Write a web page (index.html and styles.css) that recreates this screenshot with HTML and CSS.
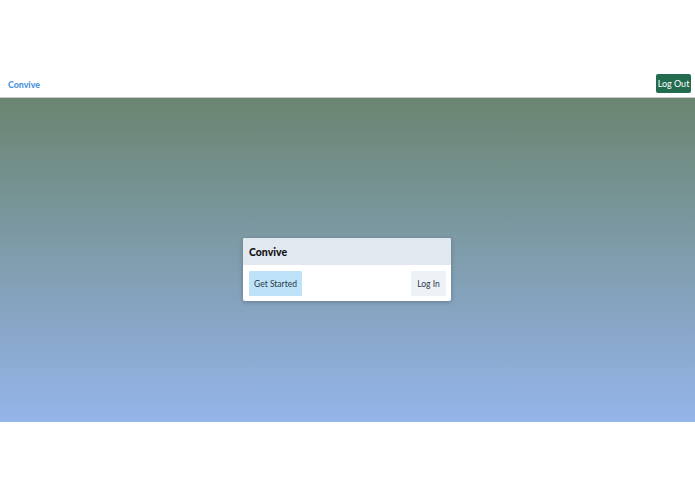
FILE: index.html
```html
<!DOCTYPE html>
<html lang="en">
<head>
    <meta charset="UTF-8">
    <meta name="viewport" content="width=device-width, initial-scale=1.0">
    <title>Convive</title>
    <link rel="stylesheet" href="styles.css">
</head>
<body>
    <nav class="navbar">
        <a class="brand" href="#">Convive</a>
        <button class="logout">Log Out</button>
    </nav>
    <main class="hero">
        <div class="card">
            <div class="card-header">Convive</div>
            <div class="card-body">
                <button class="btn btn-start">Get Started</button>
                <button class="btn btn-login">Log In</button>
            </div>
        </div>
    </main>
</body>
</html>
```

FILE: styles.css
```css
* {
    margin: 0;
    padding: 0;
    box-sizing: border-box;
    font-family: Lato, 'Noto Sans', sans-serif;
}

body {
    background: #fff;
}

.navbar {
    height: 98px;
    padding: 75px 4px 3px 8px;
    display: flex;
    justify-content: space-between;
    align-items: center;
    border-bottom: 1px solid #c8ccc9;
}

.brand {
    color: #4a93dc;
    font-size: 8.8px;
    font-weight: 900;
    text-decoration: none;
}

.logout {
    width: 35px;
    height: 19px;
    padding: 0;
    border: none;
    border-radius: 2px;
    background: #226b4e;
    color: #fff;
    font-size: 9px;
    margin-top: -2px;
}

.hero {
    height: 324px;
    background: linear-gradient(to bottom, #6a8570, #95b5eb);
    display: flex;
    justify-content: center;
    align-items: center;
    padding: 19px 1px 0 0;
}

.card {
    width: 208px;
    background: #fff;
    border-radius: 2px;
    overflow: hidden;
    box-shadow: 0 1px 4px rgba(0, 0, 0, 0.25);
}

.card-header {
    height: 27px;
    padding: 0 6px;
    display: flex;
    align-items: center;
    background: #e2e8f0;
    font-size: 10.5px;
    font-weight: 900;
    color: #111;
}

.card-body {
    padding: 6px 5px 5px 6px;
    display: flex;
    justify-content: space-between;
}

.btn {
    height: 25px;
    padding: 0 5px;
    border: none;
    border-radius: 1px;
    font-size: 8.5px;
    color: #2d3748;
}

.btn-start {
    width: 53px;
    background: #bee3f8;
}

.btn-login {
    width: 35px;
    background: #edf2f7;
}
```
